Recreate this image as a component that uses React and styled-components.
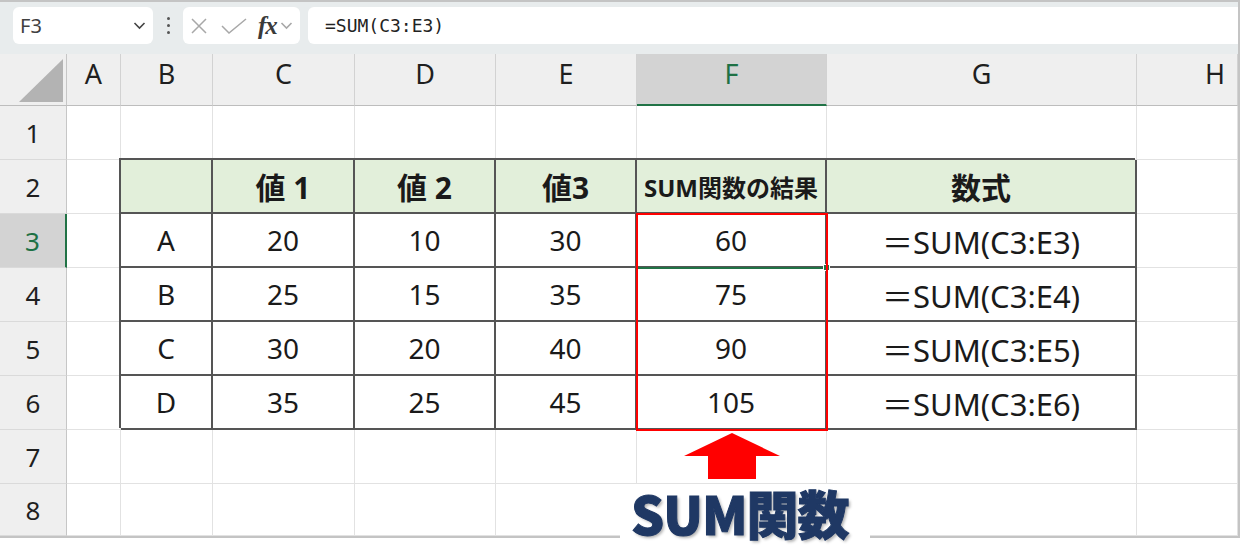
import React from "react";
import styled, { createGlobalStyle } from "styled-components";

const GlobalStyle = createGlobalStyle`
  html, body {
    margin: 0;
    padding: 0;
    background: #fff;
  }
  body {
    font-family: "Noto Sans", "Noto Sans CJK JP", sans-serif;
  }
`;

const COLS = [67, 54, 92, 142, 141, 141, 190, 310, 101];
const LETTERS = ["A", "B", "C", "D", "E", "F", "G", "H"];
const ROWS = [1, 2, 3, 4, 5, 6, 7, 8];

const HEAD = [
  { text: "", size: 30 },
  { text: "値 1", size: 30 },
  { text: "値 2", size: 30 },
  { text: "値3", size: 30 },
  { text: "SUM関数の結果", size: 24 },
  { text: "数式", size: 30 },
];

const DATA = [
  ["A", 20, 10, 30, 60, "＝SUM(C3:E3)"],
  ["B", 25, 15, 35, 75, "＝SUM(C3:E4)"],
  ["C", 30, 20, 40, 90, "＝SUM(C3:E5)"],
  ["D", 35, 25, 45, 105, "＝SUM(C3:E6)"],
];

const Frame = styled.div`
  width: 1240px;
  height: 555px;
  background: #fff;
  overflow: hidden;
`;

const Window = styled.div`
  box-sizing: border-box;
  width: 1240px;
  border-top: 2px solid #c4c4c4;
  border-right: 2px solid #c4c4c4;
  border-bottom: 2px solid #c4c4c4;
`;

/* formula bar */
const FormulaBar = styled.div`
  height: 52px;
  box-sizing: border-box;
  padding: 5px 0 0 13px;
  display: flex;
  align-items: flex-start;
  background: #e8eced;
`;

const NameBox = styled.div`
  width: 140px;
  height: 37px;
  box-sizing: border-box;
  padding: 0 7px 0 7px;
  background: #fff;
  border-radius: 6px;
  display: flex;
  align-items: center;
  justify-content: space-between;
  font-size: 20px;
  color: #404040;
`;

const Dots = styled.div`
  width: 30px;
  height: 37px;
  display: flex;
  flex-direction: column;
  align-items: center;
  justify-content: center;
  gap: 4px;
  span {
    width: 3px;
    height: 3px;
    border-radius: 50%;
    background: #555;
  }
`;

const FuncBox = styled.div`
  width: 117px;
  height: 37px;
  background: #fff;
  border-radius: 6px;
  display: flex;
  align-items: center;
  padding-left: 7px;
  box-sizing: border-box;
`;

const Fx = styled.span`
  font-family: "Liberation Serif", "DejaVu Serif", serif;
  font-style: italic;
  font-weight: 700;
  font-size: 25px;
  color: #3a3a3a;
  margin: 0 3px 0 10px;
  letter-spacing: -1px;
`;

const FormulaInput = styled.div`
  flex: 1;
  height: 37px;
  margin-left: 8px;
  background: #fff;
  border-radius: 6px 0 0 6px;
  display: flex;
  align-items: center;
  padding-left: 17px;
  font-family: "DejaVu Sans Mono", "Liberation Mono", monospace;
  font-size: 18px;
  color: #222;
`;

/* sheet */
const Sheet = styled.div`
  display: grid;
  grid-template-columns: ${COLS.map((c) => c + "px").join(" ")};
  grid-template-rows: 52px repeat(7, 54px) 52px;
`;

const Corner = styled.div`
  grid-row: 1;
  grid-column: 1;
  background: #efefef;
  border-right: 1px solid #c6c6c6;
  border-bottom: 1px solid #bdbdbd;
  position: relative;
  svg {
    position: absolute;
    left: 19px;
    top: 5px;
  }
`;

const ColHead = styled.div`
  grid-row: 1;
  grid-column: ${(p) => p.$c};
  background: ${(p) => (p.$sel ? "#d3d3d3" : "#efefef")};
  color: ${(p) => (p.$sel ? "#1e7145" : "#1f1f1f")};
  border-right: 1px solid #d2d2d2;
  border-bottom: ${(p) => (p.$sel ? "2px solid #217346" : "1px solid #bdbdbd")};
  display: flex;
  align-items: center;
  justify-content: center;
  padding: 0 0 12px ${(p) => p.$shift || 0}px;
  box-sizing: border-box;
  font-size: 27px;
`;

const RowHead = styled.div`
  grid-row: ${(p) => p.$r};
  grid-column: 1;
  background: ${(p) => (p.$sel ? "#d3d3d3" : "#efefef")};
  color: ${(p) => (p.$sel ? "#1e7145" : "#1f1f1f")};
  border-right: ${(p) => (p.$sel ? "2px solid #217346" : "1px solid #c6c6c6")};
  border-bottom: 1px solid #dadada;
  display: flex;
  align-items: center;
  justify-content: center;
  font-size: 26px;
`;

const Cell = styled.div`
  grid-row: ${(p) => p.$r};
  grid-column: ${(p) => p.$c};
  border-right: 1px solid #e2e2e2;
  border-bottom: 1px solid #e2e2e2;
`;

const Table = styled.div`
  grid-row: 3 / 8;
  grid-column: 3 / 9;
  display: grid;
  grid-template-columns: 92px 142px 141px 141px 190px 310px;
  grid-template-rows: repeat(5, 54px);
  background: #fff;
  position: relative;
  z-index: 1;
  box-shadow: -2px -2px 0 #555;
`;

const TCell = styled.div`
  box-sizing: border-box;
  border-right: 2px solid #555;
  border-bottom: 2px solid #555;
  background: ${(p) => (p.$head ? "#e2efda" : "#fff")};
  display: flex;
  align-items: center;
  justify-content: center;
  font-size: ${(p) => p.$size}px;
  font-weight: ${(p) => (p.$head ? 700 : 400)};
  color: #1a1a1a;
  white-space: nowrap;
`;

const Active = styled.div`
  grid-row: 4;
  grid-column: 7;
  z-index: 2;
  border-bottom: 2px solid #217346;
  margin-bottom: -1px;
  position: relative;
  &::after {
    content: "";
    position: absolute;
    right: -3px;
    bottom: -4px;
    width: 5px;
    height: 5px;
    background: #217346;
    border: 1px solid #fff;
  }
`;

const RedBox = styled.div`
  grid-row: 4 / 8;
  grid-column: 7;
  margin: -1px;
  border: 2px solid #ff0000;
  z-index: 3;
  pointer-events: none;
`;

const ArrowCell = styled.div`
  grid-row: 8;
  grid-column: 7;
  z-index: 2;
  display: flex;
  justify-content: center;
  align-items: flex-start;
  padding-top: 3px;
`;

const Label = styled.div`
  grid-row: 9;
  grid-column: 7;
  justify-self: start;
  align-self: start;
  margin-left: -17px;
  width: 250px;
  height: 71px;
  box-sizing: border-box;
  padding: 0 0 0 11px;
  background: #fff;
  position: relative;
  z-index: 3;
  font-family: "Noto Sans CJK JP", sans-serif;
  font-weight: 900;
  font-size: 52px;
  line-height: 58px;
  letter-spacing: -1px;
  color: #1f3864;
  -webkit-text-stroke: 1px #1f3864;
  text-shadow: 2px 2px 3px rgba(0, 0, 0, 0.3);
  white-space: nowrap;
`;

const Chevron = ({ color = "#444", w = 13 }) => (
  <svg width={w} height="9" viewBox="0 0 13 9">
    <polyline points="1.5,2 6.5,7 11.5,2" fill="none" stroke={color} strokeWidth="1.6" />
  </svg>
);

export default function App() {
  const cells = [];
  ROWS.forEach((r) => {
    LETTERS.forEach((_, i) => {
      cells.push(<Cell key={`${r}-${i}`} $r={r + 1} $c={i + 2} />);
    });
  });

  return (
    <Frame>
      <GlobalStyle />
      <Window>
        <FormulaBar>
          <NameBox>
            <span>F3</span>
            <Chevron />
          </NameBox>
          <Dots>
            <span />
            <span />
            <span />
          </Dots>
          <FuncBox>
            <svg width="18" height="18" viewBox="0 0 18 18">
              <path d="M2 2 L16 16 M16 2 L2 16" stroke="#a8a8a8" strokeWidth="1.5" />
            </svg>
            <svg width="28" height="18" viewBox="0 0 28 18" style={{ marginLeft: 12 }}>
              <polyline points="2,9 9,16 26,2" fill="none" stroke="#a8a8a8" strokeWidth="1.5" />
            </svg>
            <Fx>fx</Fx>
            <Chevron color="#a8a8a8" />
          </FuncBox>
          <FormulaInput>=SUM(C3:E3)</FormulaInput>
        </FormulaBar>

        <Sheet>
          <Corner>
            <svg width="44" height="44" viewBox="0 0 44 44">
              <polygon points="0,43 44,0 44,43" fill="#b3b3b3" />
            </svg>
          </Corner>
          {LETTERS.map((l, i) => (
            <ColHead key={l} $c={i + 2} $sel={l === "F"} $shift={l === "H" ? 56 : 0}>
              {l}
            </ColHead>
          ))}
          {ROWS.map((r) => (
            <RowHead key={r} $r={r + 1} $sel={r === 3}>
              {r}
            </RowHead>
          ))}
          {cells}

          <Table>
            {HEAD.map((h, i) => (
              <TCell key={`h${i}`} $head $size={h.size}>
                {h.text}
              </TCell>
            ))}
            {DATA.map((row) =>
              row.map((v, i) => (
                <TCell key={`${row[0]}${i}`} $size={i === 5 ? 31 : 28}>
                  {v}
                </TCell>
              ))
            )}
          </Table>

          <Active />
          <RedBox />
          <ArrowCell>
            <svg width="96" height="46" viewBox="0 0 96 46">
              <polygon points="48,0 96,23 72,23 72,46 24,46 24,23 0,23" fill="#ff0000" />
            </svg>
          </ArrowCell>
          <Label>SUM関数</Label>
        </Sheet>
      </Window>
    </Frame>
  );
}
